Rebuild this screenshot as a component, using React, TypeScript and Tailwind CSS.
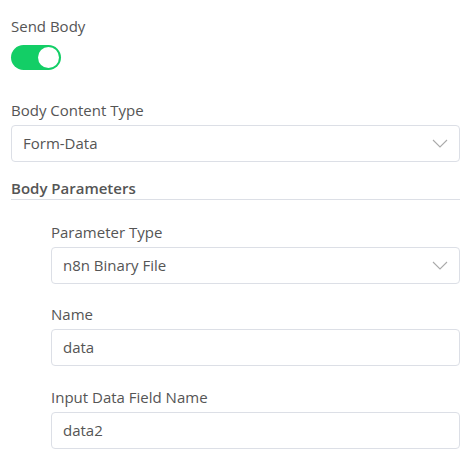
function Label({ children }: { children: string }) {
  return <div className="text-[15px] leading-[20px] text-[#555]">{children}</div>;
}

function Chevron() {
  return (
    <svg width="16" height="9" viewBox="0 0 16 9" fill="none" className="text-[#aaa]">
      <polyline points="1,1 8,8 15,1" stroke="currentColor" strokeWidth="1.1" />
    </svg>
  );
}

function SelectBox({ value }: { value: string }) {
  return (
    <div className="mt-[5px] flex h-[37px] items-center justify-between rounded-[4px] border border-[#dcdfe6] bg-white pl-[11px] pr-[11px]">
      <span className="text-[15px] text-[#555]">{value}</span>
      <Chevron />
    </div>
  );
}

function TextBox({ value }: { value: string }) {
  return (
    <div className="mt-[5px] flex h-[37px] items-center rounded-[4px] border border-[#dcdfe6] bg-white px-[11px]">
      <span className="text-[15px] text-[#555]">{value}</span>
    </div>
  );
}

export default function App() {
  return (
    <div
      className="min-h-[460px] w-[472px] bg-white pl-[11px] pr-[12px] pt-[16px]"
      style={{ fontFamily: '"Open Sans", sans-serif' }}
    >
      <Label>Send Body</Label>
      <div className="mt-[9px] flex h-[25px] w-[50px] items-center justify-end rounded-full bg-[#13ce66] pr-[2px]">
        <div className="h-[21px] w-[21px] rounded-full bg-white" />
      </div>

      <div className="mt-[30px]">
        <Label>Body Content Type</Label>
        <SelectBox value="Form-Data" />
      </div>

      <div className="mt-[16px] border-b border-[#dcdfe6] pb-[1px] text-[15px] font-semibold leading-[20px] text-[#555]">
        Body Parameters
      </div>

      <div className="pl-[40px]">
        <div className="mt-[22px]">
          <Label>Parameter Type</Label>
          <SelectBox value="n8n Binary File" />
        </div>
        <div className="mt-[20px]">
          <Label>Name</Label>
          <TextBox value="data" />
        </div>
        <div className="mt-[21px]">
          <Label>Input Data Field Name</Label>
          <TextBox value="data2" />
        </div>
      </div>
    </div>
  );
}
